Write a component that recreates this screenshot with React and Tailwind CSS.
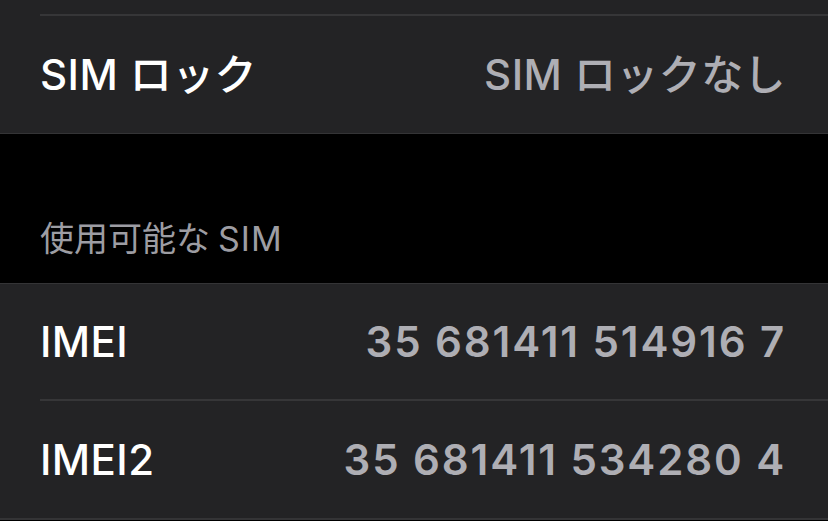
import React from "react";

const font = { fontFamily: 'Inter, "Noto Sans CJK JP", sans-serif' };

const Row = ({ label, value, divider, numeric }) => (
  <div className="flex">
    <div className="w-[40px] shrink-0" />
    <div className={`flex-1 flex items-center justify-between h-[117px] pr-[42px] ${divider ? "border-b-2 border-[#363638]" : ""}`}>
      <span className="text-[42px] font-medium text-white tracking-[0.01em]">{label}</span>
      <span className={`text-[42px] text-[#aeaeb4] ${numeric ? "font-semibold tracking-[0.045em]" : "font-medium tracking-[0.01em]"}`}>{value}</span>
    </div>
  </div>
);

export default function App() {
  return (
    <div className="w-[828px] h-[521px] bg-black overflow-hidden" style={font}>
      <div className="bg-[#232325] border-b border-[#343436]">
        <div className="flex">
          <div className="w-[40px] shrink-0" />
          <div className="flex-1 h-[16px] border-b-2 border-[#363638]" />
        </div>
        <Row label="SIM ロック" value="SIM ロックなし" />
      </div>
      <div className="h-[149px] flex items-end pl-[40px] pb-[19px]">
        <span className="text-[34px] text-[#9d9da3]">
          使用可能な<span className="ml-[8px] tracking-[0.03em]">SIM</span>
        </span>
      </div>
      <div className="bg-[#232325] border-t border-[#343436] border-b-2">
        <Row label="IMEI" value="35 681411 514916 7" divider numeric />
        <Row label="IMEI2" value="35 681411 534280 4" numeric />
      </div>
    </div>
  );
}
